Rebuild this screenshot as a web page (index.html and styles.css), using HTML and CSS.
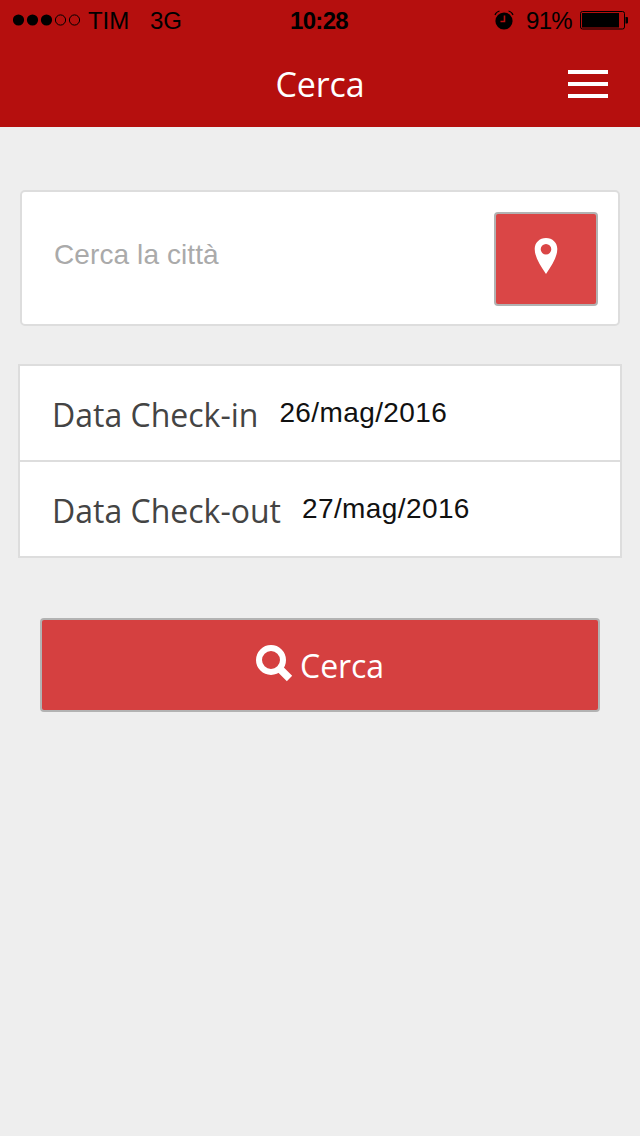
FILE: index.html
```html
<!DOCTYPE html>
<html lang="it">
<head>
<meta charset="utf-8">
<title>Cerca</title>
<link rel="stylesheet" href="styles.css">
</head>
<body>
<header class="header">
  <div class="status">
    <div class="status-left">
      <svg class="signal" width="68" height="12" viewBox="0 0 68 12"><g><circle cx="5.500" cy="6" r="5.6"/><circle cx="19.500" cy="6" r="5.6"/><circle cx="33.500" cy="6" r="5.6"/></g><g fill="none" stroke="#000"><circle cx="47.500" cy="6" r="5.1"/><circle cx="61.500" cy="6" r="5.1"/></g></svg>
      <span class="carrier">TIM</span>
      <span class="network">3G</span>
    </div>
    <span class="clock">10:28</span>
    <div class="status-right">
      <svg class="alarm" width="20" height="20" viewBox="0 0 20 20"><circle cx="10" cy="11" r="8.6"/><path d="M1 5Q2 2 5.5 1M19 5Q18 2 14.5 1" fill="none" stroke="#000" stroke-width="1.2"/><path d="M10.500 5.500V11.500H6.500" fill="none" stroke="#b50f0e" stroke-width="1.600"/></svg>
      <span class="charge">91%</span>
      <svg class="battery" width="50" height="20" viewBox="0 0 50 20"><rect x="1.500" y="1.500" width="44" height="17.500" rx="2" fill="none" stroke="#000"/><rect x="3" y="3" width="37" height="14.500"/><path d="M46.500 7H48Q49 7 49 8V12.500Q49 13.500 48 13.500H46.500Z"/></svg>
    </div>
  </div>
  <div class="navbar">
    <h1 class="title">Cerca</h1>
    <div class="menu"><span class="bar"></span><span class="bar"></span><span class="bar"></span></div>
  </div>
</header>
<main class="content">
  <div class="search-box">
    <span class="placeholder">Cerca la città</span>
    <div class="locate"><svg width="24" height="38" viewBox="0 0 24 38"><path fill="#fff" fill-rule="evenodd" d="M12 1C5.5 1 .7 5.7.7 12 .7 20 6 28 12 37 18 28 23.3 20 23.3 12 23.3 5.7 18.500 1 12 1ZM12 7A5.300 5.300 0 1 1 12 17.600 5.300 5.300 0 0 1 12 7Z"/></svg></div>
  </div>
  <div class="dates">
    <div class="row"><span class="label">Data Check-in</span><span class="value">26/mag/2016</span></div>
    <div class="row"><span class="label">Data Check-out</span><span class="value">27/mag/2016</span></div>
  </div>
  <div class="submit">
    <svg class="lens" width="37" height="37" viewBox="0 0 37 37"><circle cx="15" cy="15" r="12" fill="none" stroke="#fff" stroke-width="6"/><path d="M22.500 22.500L33.500 33.500" stroke="#fff" stroke-width="7.500"/></svg>
    <span class="submit-text">Cerca</span>
  </div>
</main>
</body>
</html>
```
FILE: styles.css
```css
* { box-sizing: border-box; }
body {
  margin: 0;
  min-height: 1136px;
  background: #eeeeee;
  font-family: "Open Sans", sans-serif;
}
svg { display: block; flex: none; }
span { white-space: nowrap; }
.header {
  height: 127px;
  background: #b50f0e;
}
.status {
  display: grid;
  grid-template-columns: 1fr auto 1fr;
  align-items: center;
  height: 40px;
  padding: 0 11px 0 13px;
  font-family: "Liberation Sans", sans-serif;
  font-size: 24px;
  line-height: 38px;
  color: #000;
}
.status-left, .status-right { display: flex; align-items: center; }
.status-right { justify-content: flex-end; }
.status span { padding-top: 2px; }
.carrier { margin-left: 7px; letter-spacing: -0.1px; }
.network { margin-left: 21px; letter-spacing: -0.1px; }
.clock { margin: 0 4px 0 0; font-weight: 700; letter-spacing: -0.7px; }
.alarm { margin-right: 12px; }
.charge { margin-right: 7px; letter-spacing: -0.7px; }
.navbar {
  display: grid;
  grid-template-columns: 1fr auto 1fr;
  align-items: center;
  height: 87px;
  padding: 0 32px;
}
.title {
  grid-column: 2;
  margin: 0;
  font-size: 34px;
  font-weight: 400;
  line-height: 46px;
  letter-spacing: -0.1px;
  color: #fff;
}
.menu {
  display: grid;
  gap: 8px;
  width: 40px;
  justify-self: end;
}
.bar { height: 4px; background: #fff; }
.content { padding: 63px 18px 0; }
.search-box {
  display: flex;
  align-items: center;
  justify-content: space-between;
  height: 136px;
  margin: 0 2px;
  padding: 0 20px 0 32px;
  border: 2px solid #dddddd;
  border-radius: 5px;
  background: #fff;
}
.placeholder {
  padding-bottom: 6px;
  font-family: "Liberation Sans", sans-serif;
  font-size: 28px;
  letter-spacing: 0.1px;
  color: #aaaaaa;
}
.locate {
  display: flex;
  align-items: center;
  justify-content: center;
  width: 104px;
  height: 94px;
  margin-top: 2px;
  padding-bottom: 6px;
  border: 2px solid #b2b2b2;
  border-radius: 4px;
  background: #da4646;
}
.dates {
  margin-top: 38px;
  border: 2px solid #dddddd;
  background: #fff;
}
.row {
  display: flex;
  align-items: center;
  height: 94px;
  padding: 4px 0 0 32px;
}
.row + .row { border-top: 2px solid #dddddd; height: 96px; }
.label {
  font-size: 32px;
  line-height: 44px;
  color: #444444;
}
.value {
  margin-left: 21px;
  padding-bottom: 4px;
  font-family: "Liberation Sans", sans-serif;
  font-size: 28px;
  letter-spacing: 0.4px;
  color: #111;
}
.submit {
  display: flex;
  align-items: center;
  justify-content: center;
  height: 94px;
  margin: 60px 22px 0;
  border: 2px solid #b2b2b2;
  border-radius: 4px;
  background: #d54040;
  color: #fff;
}
.lens { margin: 0 7px 4px 0; }
.submit-text { padding-top: 2px; font-size: 32px; line-height: 44px; letter-spacing: -0.1px; }
```
